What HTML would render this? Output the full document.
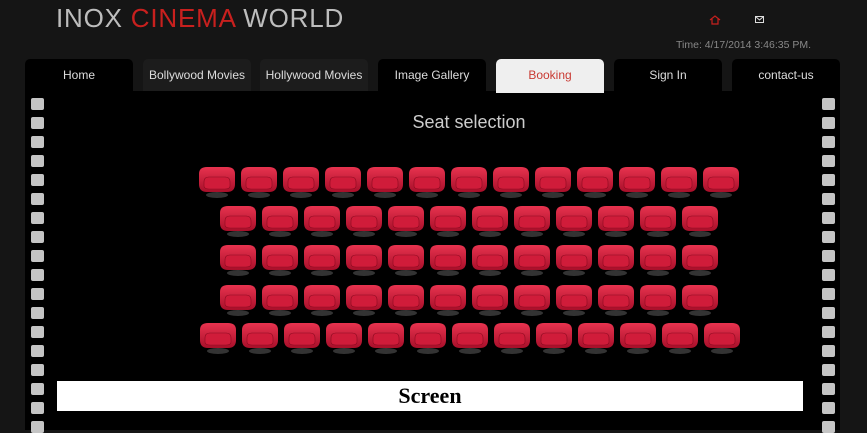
<!DOCTYPE html>
<html><head><meta charset="utf-8"><style>
body{margin:0;width:867px;height:430px;overflow:hidden;background:#151515;font-family:"Liberation Sans",sans-serif;position:relative}
.logo{position:absolute;left:56px;top:3px;font-size:26px;color:#bdbdbd;letter-spacing:0.8px}
.logo span{color:#c8201e}
.time{position:absolute;left:676px;top:39px;font-size:10.5px;color:#888}
.tab{position:absolute;top:59px;width:108px;height:32px;background:#000;border-radius:5px 5px 0 0;color:#ddd;font-size:12px;text-align:center;line-height:32px}
.tab.b{background:#1c1c1c}
.tab.act{background:#efefef;color:#c93a33;height:34px}
.panel{position:absolute;left:25px;top:91px;width:815px;height:339px;background:#000}
.sq{position:absolute;width:13px;height:12px;background:#c4c4c4;border-radius:2px}
h1{position:absolute;left:0;width:938px;top:112px;margin:0;text-align:center;font-weight:normal;font-size:18px;color:#ccc}
.screen{position:absolute;left:57px;top:381px;width:746px;height:30px;background:#fff;text-align:center;font:bold 22px "Liberation Serif",serif;line-height:30px;color:#000}
</style></head><body>
<div class="logo">INOX <span>CINEMA</span> WORLD</div>
<svg style="position:absolute;left:709px;top:15px" width="12" height="10" viewBox="0 0 12 10"><path d="M1 5L6 1 11 5M3 4V9H9V4" fill="none" stroke="#c8201e" stroke-width="1.2"/></svg>
<svg style="position:absolute;left:755px;top:16px" width="10" height="8" viewBox="0 0 10 8"><rect x=".5" y=".5" width="8" height="6" fill="none" stroke="#ddd"/><path d="M.5 .5L4.5 4 8.5 .5" fill="none" stroke="#ddd"/></svg>
<div class="time">Time: 4/17/2014 3:46:35 PM.</div>
<div class="panel"></div>
<div class="tab" style="left:25px">Home</div>
<div class="tab b" style="left:143px">Bollywood Movies</div>
<div class="tab b" style="left:260px">Hollywood Movies</div>
<div class="tab" style="left:378px">Image Gallery</div>
<div class="tab act" style="left:496px">Booking</div>
<div class="tab" style="left:614px">Sign In</div>
<div class="tab" style="left:732px">contact-us</div>
<div id="sq"></div>
<h1>Seat selection</h1>
<svg width="867" height="430" style="position:absolute;left:0;top:0">
<defs>
<linearGradient id="g" x1="0" y1="0" x2="0" y2="1"><stop offset="0" stop-color="#e8334f"/><stop offset="1" stop-color="#a80f2a"/></linearGradient>
<g id="s">
<ellipse cx="20" cy="29" rx="11" ry="3" fill="#333"/>
<path d="M2 8Q2 1 10 1H30Q38 1 38 8V18Q38 26 30 26H10Q2 26 2 18Z" fill="url(#g)"/>
<path d="M7 16Q7 11 12 11H28Q33 11 33 16V20Q33 23 28 23H12Q7 23 7 20Z" fill="#d01c3a" stroke="#8c0a20" stroke-width=".6"/>
</g></defs>
<g id="seats"></g>
</svg>
<div class="screen">Screen</div>
<script>
var h='';for(var y=98;y<430;y+=19){h+='<div class="sq" style="left:31px;top:'+y+'px"></div><div class="sq" style="left:822px;top:'+y+'px"></div>';}
document.getElementById('sq').innerHTML=h;
var rows=[[197,166,13],[218,205,12],[218,244,12],[218,284,12],[198,322,13]];
var s='';rows.forEach(function(r){for(var i=0;i<r[2];i++)s+='<use href="#s" x="'+(r[0]+i*42)+'" y="'+r[1]+'"/>';});
document.getElementById('seats').innerHTML=s;
</script>
</body></html>
